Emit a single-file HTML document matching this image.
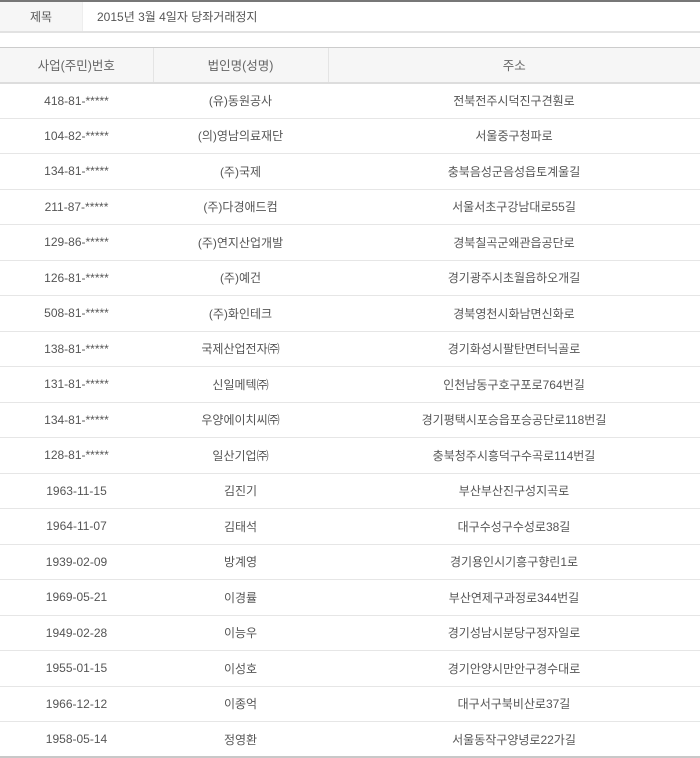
<!DOCTYPE html>
<html><head><meta charset="utf-8"><style>
*{margin:0;padding:0;box-sizing:border-box}
body{width:700px;height:757px;background:#fff;font-family:"Liberation Sans","Noto Sans CJK KR",sans-serif;font-size:12px;color:#555;overflow:hidden;position:relative}
.top{position:absolute;left:0;top:0;width:700px;height:2px;background:#777}
.title{position:absolute;left:0;top:2px;width:700px;height:31px;border-bottom:2px solid #e2e2e2;display:flex;align-items:center}
.title .l{width:83px;height:100%;background:#f6f6f6;display:flex;align-items:center;justify-content:center;border-right:1px solid #eee}
.title .v{padding-left:14px}
table{position:absolute;left:0;top:47px;width:700px;border-collapse:collapse;table-layout:fixed}
th{height:35px;background:#f6f6f6;font-weight:normal;color:#666;font-size:12.5px;border-top:1px solid #ccc;border-bottom:2px solid #ddd;border-left:1px solid #e4e4e4}
th:first-child{border-left:none}
td{height:35.5px;text-align:center;border-bottom:1px solid #e6e6e6}
tr:last-child td{border-bottom:2px solid #c8c8c8}
</style></head><body>
<div class="top"></div>
<div class="title"><div class="l">제목</div><div class="v">2015년 3월 4일자 당좌거래정지</div></div>
<table>
<colgroup><col style="width:153px"><col style="width:175px"><col style="width:372px"></colgroup>
<tr><th>사업(주민)번호</th><th>법인명(성명)</th><th>주소</th></tr>
<tr><td>418-81-*****</td><td>(유)동원공사</td><td>전북전주시덕진구견훤로</td></tr>
<tr><td>104-82-*****</td><td>(의)영남의료재단</td><td>서울중구청파로</td></tr>
<tr><td>134-81-*****</td><td>(주)국제</td><td>충북음성군음성읍토계울길</td></tr>
<tr><td>211-87-*****</td><td>(주)다경애드컴</td><td>서울서초구강남대로55길</td></tr>
<tr><td>129-86-*****</td><td>(주)연지산업개발</td><td>경북칠곡군왜관읍공단로</td></tr>
<tr><td>126-81-*****</td><td>(주)예건</td><td>경기광주시초월읍하오개길</td></tr>
<tr><td>508-81-*****</td><td>(주)화인테크</td><td>경북영천시화남면신화로</td></tr>
<tr><td>138-81-*****</td><td>국제산업전자㈜</td><td>경기화성시팔탄면터닉골로</td></tr>
<tr><td>131-81-*****</td><td>신일메텍㈜</td><td>인천남동구호구포로764번길</td></tr>
<tr><td>134-81-*****</td><td>우양에이치씨㈜</td><td>경기평택시포승읍포승공단로118번길</td></tr>
<tr><td>128-81-*****</td><td>일산기업㈜</td><td>충북청주시흥덕구수곡로114번길</td></tr>
<tr><td>1963-11-15</td><td>김진기</td><td>부산부산진구성지곡로</td></tr>
<tr><td>1964-11-07</td><td>김태석</td><td>대구수성구수성로38길</td></tr>
<tr><td>1939-02-09</td><td>방계영</td><td>경기용인시기흥구향린1로</td></tr>
<tr><td>1969-05-21</td><td>이경률</td><td>부산연제구과정로344번길</td></tr>
<tr><td>1949-02-28</td><td>이능우</td><td>경기성남시분당구정자일로</td></tr>
<tr><td>1955-01-15</td><td>이성호</td><td>경기안양시만안구경수대로</td></tr>
<tr><td>1966-12-12</td><td>이종억</td><td>대구서구북비산로37길</td></tr>
<tr><td>1958-05-14</td><td>정영환</td><td>서울동작구양녕로22가길</td></tr>
</table>
</body></html>
